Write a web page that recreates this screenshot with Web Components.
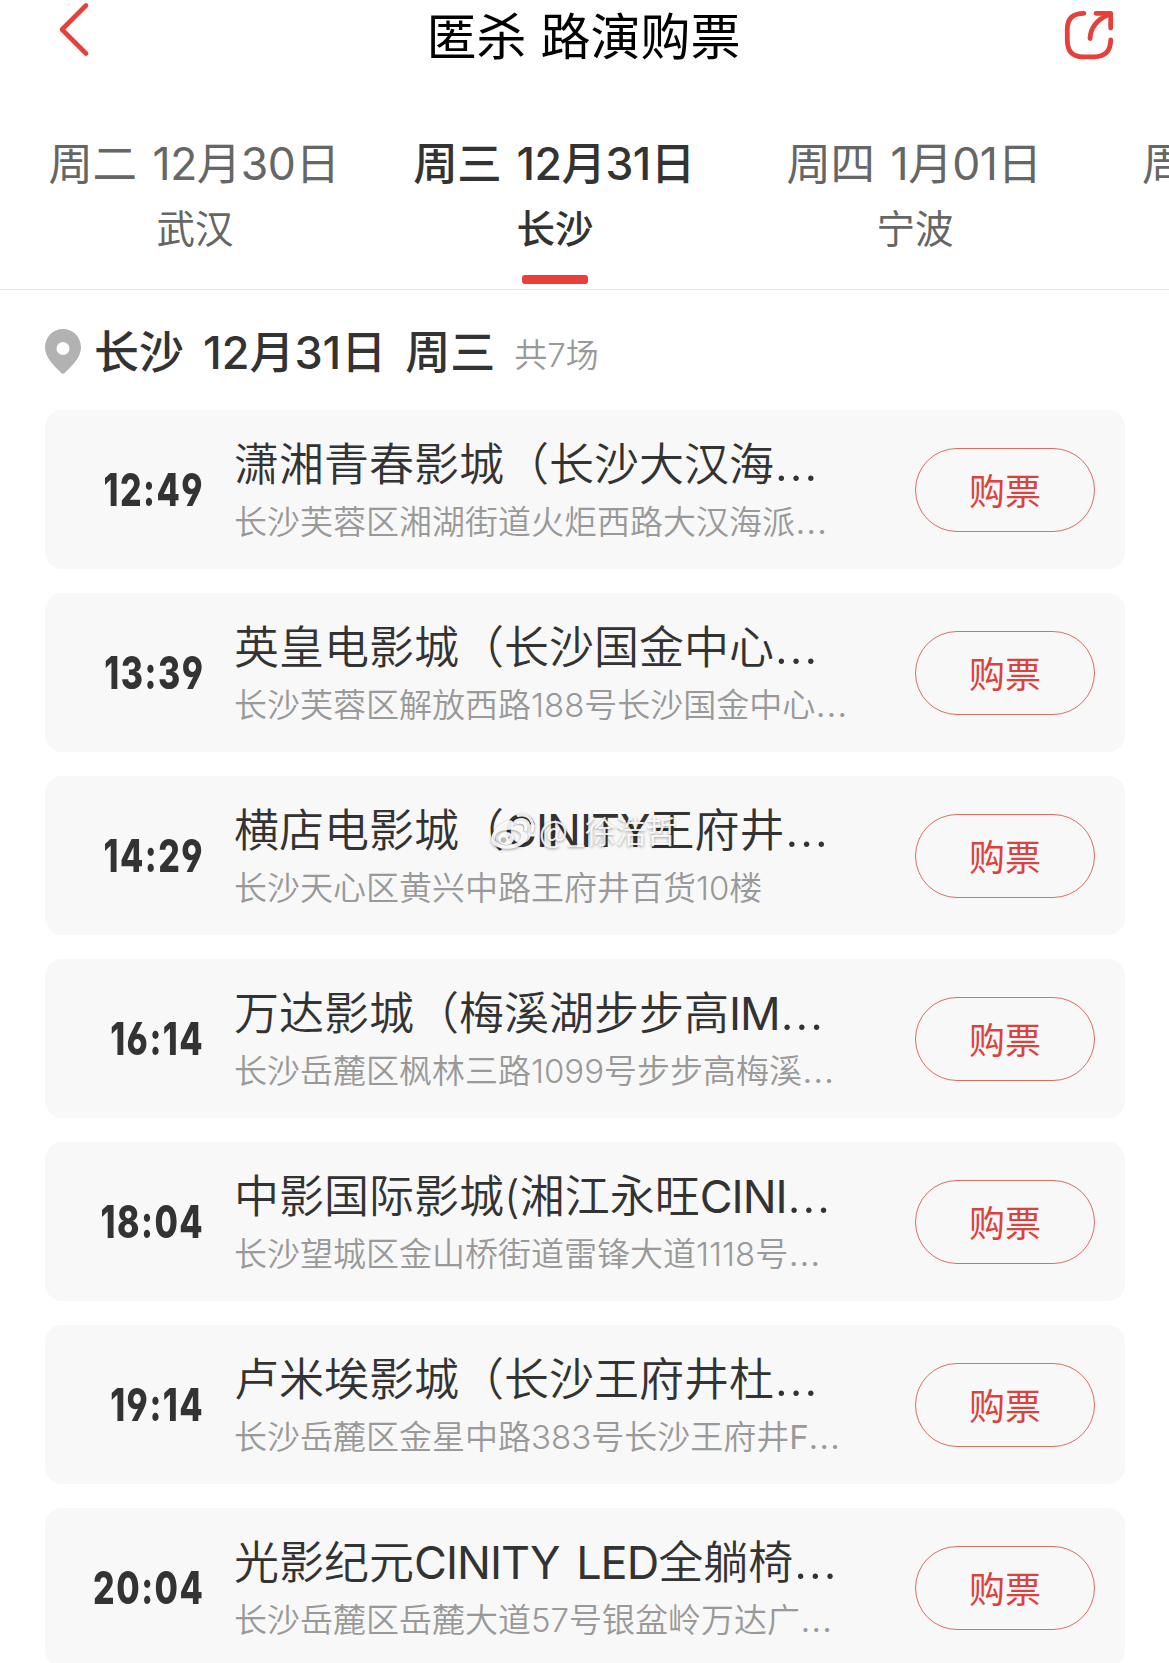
<!DOCTYPE html>
<html lang="zh-CN">
<head>
<meta charset="utf-8">
<title>匿杀 路演购票</title>
<style>
  html, body {
    margin: 0;
    background: #fff;
  }
  body {
    width: 1169px;
    height: 1663px;
    overflow: hidden;
    font-family: Inter, "Noto Sans CJK SC", sans-serif;
    color: #333;
  }
</style>
</head>
<body>
<roadshow-page></roadshow-page>

<script>
class NavHeader extends HTMLElement {
  constructor() {
    super();
    this.attachShadow({ mode: 'open' });
    this.shadowRoot.innerHTML = `
      <style>
        :host {
          display: flex;
          justify-content: space-between;
          align-items: flex-start;
          height: 112px;
          padding: 0 52px 0 56px;
        }
        .title {
          margin: 1px 6px 0 0;
          font-size: 50px;
          line-height: 73px;
          color: #000;
          white-space: nowrap;
        }
        svg {
          display: block;
          fill: none;
          stroke: #e5403c;
          stroke-linecap: round;
          stroke-linejoin: round;
        }
      </style>
      <svg width="56" height="60" viewBox="0 0 56 60" stroke-width="4.600">
        <path d="M30 5.500 L6 29.500 L30 53.500"/>
      </svg>
      <div class="title"><slot></slot></div>
      <svg width="56" height="64" viewBox="0 0 56 64" stroke-width="4.800">
        <path d="M23 13.300 Q6.300 13.300 6.300 29 V40 Q6.300 56.800 22 56.800 H33 Q49.700 56.800 49.700 40"/>
        <path d="M35 13.300 H49.700 V28"/>
        <path d="M29 38.500 Q30 22 48 14.500"/>
      </svg>
    `;
  }
}

class DateTab extends HTMLElement {
  static get observedAttributes() {
    return ['day', 'active'];
  }

  constructor() {
    super();
    this.attachShadow({ mode: 'open' });
    this.render();
  }

  attributeChangedCallback() {
    this.render();
  }

  render() {
    const active = this.hasAttribute('active');
    this.shadowRoot.innerHTML = `
      <style>
        :host {
          display: flex;
          flex-direction: column;
          align-items: center;
          flex: 0 0 360px;
          color: ${active ? '#333' : '#666'};
          font-weight: ${active ? 500 : 400};
          white-space: nowrap;
        }
        .day {
          font-size: 44.5px;
          line-height: 64px;
          letter-spacing: -0.5px;
          word-spacing: 4px;
          margin-right: 2px;
        }
        .city {
          font-size: 38.5px;
          line-height: 66px;
        }
        .bar {
          width: 66px;
          height: 9px;
          margin-top: 13px;
          border-radius: 3px;
          background: ${active ? '#ea3e3a' : 'transparent'};
        }
      </style>
      <div class="day">${this.getAttribute('day') || ''}</div>
      <div class="city"><slot></slot></div>
      <div class="bar"></div>
    `;
  }
}

class DateTabs extends HTMLElement {
  constructor() {
    super();
    this.attachShadow({ mode: 'open' });
    this.shadowRoot.innerHTML = `
      <style>
        :host {
          display: flex;
          box-sizing: border-box;
          height: 178px;
          padding: 20px 0 0 15px;
          border-bottom: 1px solid #e5e5e5;
          overflow: hidden;
        }
      </style>
      <slot></slot>
    `;
  }
}

class CityHeading extends HTMLElement {
  constructor() {
    super();
    this.attachShadow({ mode: 'open' });
    this.shadowRoot.innerHTML = `
      <style>
        :host {
          display: flex;
          align-items: flex-start;
          box-sizing: border-box;
          height: 120px;
          padding: 32px 45px 0;
          white-space: nowrap;
        }
        svg {
          display: block;
          margin-top: 7px;
        }
        .title {
          margin-left: 13px;
          font-size: 45px;
          font-weight: 500;
          line-height: 61px;
          word-spacing: 7px;
        }
        .count {
          margin-left: 19px;
          font-size: 33px;
          font-weight: 350;
          line-height: 67px;
          color: #999;
        }
      </style>
      <svg width="36" height="45" viewBox="0 0 36 45">
        <path fill="#b2b2b2" fill-rule="evenodd" d="M18 0 C28 0 36 8 36 18.500 C36 29 26 37.500 20 43.800 Q18 45.800 16 43.800 C10 37.500 0 29 0 18.500 C0 8 8 0 18 0 Z M18 13 a6.500 6.500 0 1 0 0 13 a6.500 6.500 0 1 0 0 -13 Z"/>
      </svg>
      <div class="title"><slot></slot></div>
      <div class="count"><slot name="count"></slot></div>
    `;
  }
}

class ShowCard extends HTMLElement {
  constructor() {
    super();
    this.attachShadow({ mode: 'open' });
    this.shadowRoot.innerHTML = `
      <style>
        :host {
          display: flex;
          align-items: center;
          box-sizing: border-box;
          height: 159px;
          padding: 0 30px 0 0;
          border-radius: 17px;
          background: #f8f8f8;
          white-space: nowrap;
        }
        .time {
          flex: 0 0 159px;
          display: flex;
          justify-content: flex-end;
        }
        .time span {
          font-size: 45.5px;
          font-weight: 800;
          line-height: 60px;
          letter-spacing: 2px;
          font-kerning: none;
          font-feature-settings: "cv03", "cv04";
          transform: scaleX(0.745);
          transform-origin: right center;
        }
        .info {
          flex: 1;
          margin-left: 30px;
        }
        .name {
          font-size: 45px;
          font-weight: 350;
          line-height: 63px;
          word-spacing: 4px;
        }
        .address {
          margin-top: 2px;
          font-size: 33px;
          font-weight: 350;
          line-height: 48px;
          color: #999;
        }
        ::slotted([slot="name"]), ::slotted([slot="address"]) {
          display: block;
        }
        button {
          width: 180px;
          height: 84px;
          padding: 4px 0 0;
          border: 1.5px solid #dd6c65;
          border-radius: 42px;
          background: none;
          font: inherit;
          font-size: 36px;
          line-height: 78px;
          color: #db423b;
        }
      </style>
      <div class="time"><span><slot name="time"></slot></span></div>
      <div class="info">
        <div class="name"><slot name="name"></slot></div>
        <div class="address"><slot name="address"></slot></div>
      </div>
      <button>购票</button>
    `;
  }
}

class WeiboMark extends HTMLElement {
  constructor() {
    super();
    this.attachShadow({ mode: 'open' });
    this.shadowRoot.innerHTML = `
      <style>
        :host {
          display: flex;
          align-items: flex-start;
          gap: 4px;
          font-family: "Noto Sans CJK SC", sans-serif;
          font-size: 30.5px;
          line-height: 36px;
          color: rgba(255, 255, 255, 0.9);
          text-shadow: 0 1px 3px rgba(0, 0, 0, 0.4);
          white-space: nowrap;
        }
        svg {
          display: block;
          margin-top: 1px;
          filter: drop-shadow(0 1px 1.5px rgba(0, 0, 0, 0.4));
        }
      </style>
      <svg width="45" height="38" viewBox="0 0 45 38">
        <path fill="#fff" fill-opacity="0.9" fill-rule="evenodd" d="M17 8 C21 6 25 8 23 14 C29 11 35 12 33 18 C39 20 39 26 34 30 C27 37 9 38 3 31 C-3 23 8 11 17 8 Z M17 17 C9 17 4 22 5 26 C6 31 13 33 20 32 C27 31 32 27 31 22 C30 18 24 16 17 17 Z"/>
        <ellipse cx="16" cy="25.500" rx="8" ry="6.500" fill="#fff" fill-opacity="0.9"/>
        <circle cx="13.500" cy="27" r="2.800" fill="#bbb"/>
        <circle cx="19" cy="24.500" r="1.300" fill="#bbb"/>
        <path d="M28 9.500 C34 8 37 12 35.500 17 M28 2.500 C38 0 45 8 42 18" fill="none" stroke="#fff" stroke-opacity="0.9" stroke-width="3" stroke-linecap="round"/>
      </svg>
      <span><slot></slot></span>
    `;
  }
}

const SHOWS = [
  ['12:49', '潇湘青春影城（长沙大汉海…', '长沙芙蓉区湘湖街道火炬西路大汉海派…'],
  ['13:39', '英皇电影城（长沙国金中心…', '长沙芙蓉区解放西路188号长沙国金中心…'],
  ['14:29', '横店电影城（CINITY王府井…', '长沙天心区黄兴中路王府井百货10楼'],
  ['16:14', '万达影城（梅溪湖步步高IM…', '长沙岳麓区枫林三路1099号步步高梅溪…'],
  ['18:04', '中影国际影城(湘江永旺CINI…', '长沙望城区金山桥街道雷锋大道1118号…'],
  ['19:14', '卢米埃影城（长沙王府井杜…', '长沙岳麓区金星中路383号长沙王府井F…'],
  ['20:04', '光影纪元CINITY LED全躺椅…', '长沙岳麓区岳麓大道57号银盆岭万达广…'],
];

// latin runs are set a little tighter, the ellipsis a little wider
const tune = (text) => text
  .replace(/[A-Z]+/g, '<span class="latin">$&</span>')
  .replace('…', '<span class="dots">…</span>');

class RoadshowPage extends HTMLElement {
  constructor() {
    super();
    this.attachShadow({ mode: 'open' });
    this.shadowRoot.innerHTML = `
      <style>
        :host {
          display: block;
          position: relative;
          height: 1663px;
          overflow: hidden;
        }
        .list {
          display: flex;
          flex-direction: column;
          gap: 24px;
          padding: 0 44px 0 45px;
        }
        .latin {
          font-weight: 400;
          letter-spacing: -0.022em;
        }
        .dots {
          font-size: 1.16em;
          line-height: 0;
        }
        weibo-mark {
          position: absolute;
          left: 490px;
          top: 812px;
        }
      </style>
      <nav-header>匿杀 路演购票</nav-header>
      <date-tabs>
        <date-tab day="周二 12月30日">武汉</date-tab>
        <date-tab day="周三 12月31日" active>长沙</date-tab>
        <date-tab day="周四 1月01日">宁波</date-tab>
        <date-tab day="周五 1月02日"></date-tab>
      </date-tabs>
      <city-heading>长沙 12月31日 周三<span slot="count">共7场</span></city-heading>
      <div class="list">
        ${SHOWS.map(([time, name, address]) => `
          <show-card>
            <span slot="time">${time}</span>
            <span slot="name">${tune(name)}</span>
            <span slot="address">${tune(address)}</span>
          </show-card>
        `).join('')}
      </div>
      <weibo-mark>@_徐浩哲</weibo-mark>
    `;
  }
}

customElements.define('nav-header', NavHeader);
customElements.define('date-tab', DateTab);
customElements.define('date-tabs', DateTabs);
customElements.define('city-heading', CityHeading);
customElements.define('show-card', ShowCard);
customElements.define('weibo-mark', WeiboMark);
customElements.define('roadshow-page', RoadshowPage);
</script>
</body>
</html>
